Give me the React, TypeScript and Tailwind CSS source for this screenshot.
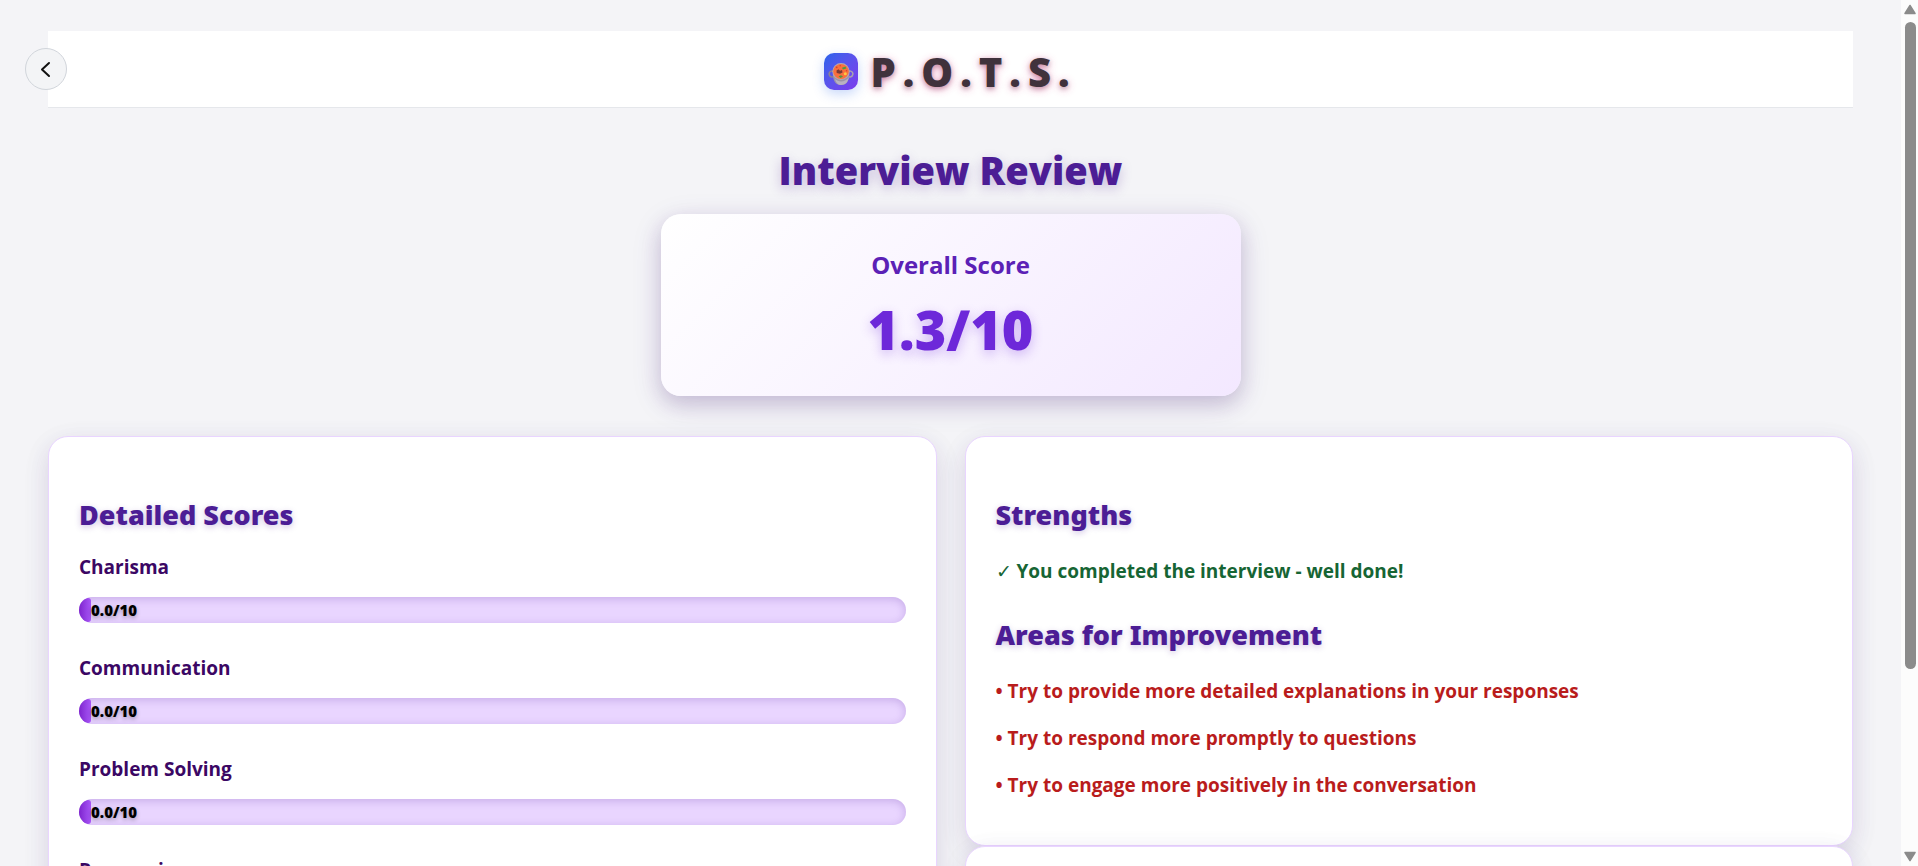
const scores = [
  { label: "Charisma", value: 0 },
  { label: "Communication", value: 0 },
  { label: "Problem Solving", value: 0 },
  { label: "Responsiveness", value: 0 },
];

const strengths = ["You completed the interview - well done!"];

const improvements = [
  "Try to provide more detailed explanations in your responses",
  "Try to respond more promptly to questions",
  "Try to engage more positively in the conversation",
];

const cardClass =
  "rounded-[20px] border border-[#e9d5ff] bg-white px-[30px] shadow-[0_8px_32px_rgba(76,29,149,0.06),0_8px_24px_rgba(60,40,90,0.10)]";
const headingClass =
  "font-['Noto_Sans',sans-serif] text-[27px] leading-9 font-black text-[#4c1d95] [text-shadow:0_2px_6px_rgba(76,29,149,0.25)]";

function PotIcon() {
  return (
    <svg viewBox="0 0 26 24" className="h-6 w-[26px]" aria-hidden="true">
      <ellipse cx="4" cy="12" rx="2.8" ry="3" fill="none" stroke="#8d8592" strokeWidth="1.5" transform="rotate(-15 4 12)" />
      <ellipse cx="22" cy="12" rx="2.8" ry="3" fill="none" stroke="#aaa3ad" strokeWidth="1.5" transform="rotate(15 22 12)" />
      <path d="M4.8 9.5C4.8 17 6 23 13 23s8.400-6 8.400-13.500z" fill="#9c94a5" />
      <path d="M7 17c1.200 4 3 6 6 6 4.500 0 7-3 8-8-3 5-10 6-14 2z" fill="#b9b2c2" />
      <ellipse cx="13" cy="9.500" rx="8.600" ry="8.500" fill="#b5a9b1" />
      <ellipse cx="13" cy="9.500" rx="7.800" ry="7.600" fill="#f9703e" />
      <path d="M8.500 8.500l2-1.300 1.500 1.500 2-.6.500 2.400-2.500 1.300-3.300-.8z" fill="#7b3a35" />
      <path d="M14 5.800l3.500-1.200.8 1.800-3.400 1.200zM10.500 14.200l2.500-.9 2 1.300-2.400 1.300z" fill="#4e9a3f" />
      <circle cx="17.300" cy="11.800" r="1.500" fill="#ffc83d" />
      <circle cx="8.700" cy="5.300" r=".9" fill="#d9412d" />
      <circle cx="12.200" cy="3.800" r=".7" fill="#d9412d" />
      <circle cx="18.600" cy="8.700" r=".7" fill="#d9412d" />
    </svg>
  );
}

function ScoreRow({ label, value }: { label: string; value: number }) {
  return (
    <div>
      <h3 className="text-[19px] leading-7 font-bold text-[#3b0764]">{label}</h3>
      <div
        role="progressbar"
        aria-label={label}
        aria-valuemin={0}
        aria-valuemax={10}
        aria-valuenow={value}
        className="mt-4 flex h-[26px] items-center overflow-hidden rounded-full bg-[#e9d5ff] shadow-[inset_0_2px_8px_rgba(76,29,149,0.22)]"
      >
        <div
          className="h-6 min-w-3 rounded-l-[12px] rounded-r-[4px] bg-linear-to-r from-[#7e22ce] to-[#a855f7]"
          style={{ width: `${value * 10}%` }}
        />
        <span className="text-[15px] leading-6 font-extrabold text-black [text-shadow:0_2px_4px_rgba(0,0,0,0.3)]">
          {value.toFixed(1)}/10
        </span>
      </div>
    </div>
  );
}

function Scrollbar() {
  return (
    <div className="flex w-[17px] shrink-0 flex-col items-center bg-[#fcfcfc] py-1" aria-hidden="true">
      <svg viewBox="0 0 12 11" className="ml-px h-[11px] w-3">
        <path d="M6 1.500L11 9.500H1z" fill="#8b8b8b" stroke="#8b8b8b" strokeWidth="1.500" strokeLinejoin="round" />
      </svg>
      <div className="mt-[7px] ml-px flex w-[11px] flex-1 flex-col">
        <div className="flex-[78] rounded-full bg-[#8b8b8b]" />
        <div className="flex-[22]" />
      </div>
      <svg viewBox="0 0 12 11" className="ml-px h-[11px] w-3">
        <path d="M6 9.500L11 1.500H1z" fill="#8b8b8b" stroke="#8b8b8b" strokeWidth="1.500" strokeLinejoin="round" />
      </svg>
    </div>
  );
}

export default function App() {
  return (
    <div className="flex h-screen overflow-hidden bg-[#f4f4f7] font-['Open_Sans','Noto_Sans',sans-serif]">
      <div className="relative min-w-0 flex-1 overflow-hidden px-12 pt-[31px]">
        <button
          type="button"
          aria-label="Back"
          className="absolute top-12 left-[25px] flex size-[42px] items-center justify-center rounded-full border border-[#d1d5db] bg-[#f3f4f6] text-[#111111]"
        >
          <svg viewBox="0 0 20 20" className="size-5" fill="none" stroke="currentColor" strokeWidth="2" strokeLinecap="round" strokeLinejoin="round" aria-hidden="true">
            <path d="M13 4L6 10.500L13 17" />
          </svg>
        </button>

        <header className="flex items-center justify-center gap-3 border-b border-[#e5e7eb] bg-white pt-[22px] pb-[17px]">
          <div className="flex h-[37px] w-[34px] items-center justify-center rounded-[10px] bg-linear-to-br from-[#2563eb] to-[#7c3aed] pt-1 shadow-[0_4px_12px_rgba(37,99,235,0.25)]">
            <PotIcon />
          </div>
          <span className="text-[40px] leading-[37px] font-extrabold tracking-[7px] text-[#40323c] [text-shadow:0_2px_8px_rgba(219,39,119,0.45),0_2px_4px_rgba(64,50,60,0.3)]">
            P.O.T.S.
          </span>
        </header>

        <main>
          <h1 className="mt-[38px] text-center text-[38px] leading-[48px] font-extrabold text-[#4c1d95] [text-shadow:0_4px_12px_rgba(76,29,149,0.25)]">
            Interview Review
          </h1>

          <section className="mx-auto mt-5 max-w-[580px] rounded-[20px] bg-[linear-gradient(135deg,#ffffff_0%,#f3e8ff_100%)] pt-[35px] pb-[35px] text-center shadow-[0_8px_32px_rgba(76,29,149,0.12),0_8px_20px_rgba(60,30,100,0.18)]">
            <h2 className="text-[24px] leading-8 font-bold text-[#5b21b6]">Overall Score</h2>
            <p className="mt-4 font-['Noto_Sans',sans-serif] text-[54px] leading-[64px] font-black text-[#6d28d9] [text-shadow:0_4px_12px_rgba(109,40,217,0.3)]">
              1.3/10
            </p>
          </section>

          <div className="mt-10 grid grid-cols-2 gap-7">
            <section className={`${cardClass} pt-[60px] pb-12`}>
              <h2 className={headingClass}>Detailed Scores</h2>
              <div className="mt-5 flex flex-col gap-[31px]">
                {scores.map((s) => (
                  <ScoreRow key={s.label} label={s.label} value={s.value} />
                ))}
              </div>
            </section>

            <div>
              <section className={`${cardClass} pt-[60px] pb-[46px]`}>
                <h2 className={headingClass}>Strengths</h2>
                <ul className="mt-6 flex flex-col gap-[19px] text-[19px] leading-7 font-bold text-[#166534]">
                  {strengths.map((s) => (
                    <li key={s}>
                      <span className="font-normal">✓</span> {s}
                    </li>
                  ))}
                </ul>
                <h2 className={`${headingClass} mt-8`}>Areas for Improvement</h2>
                <ul className="mt-6 flex flex-col gap-[19px] text-[19px] leading-7 font-bold text-[#b91c1c]">
                  {improvements.map((s) => (
                    <li key={s}>• {s}</li>
                  ))}
                </ul>
              </section>
              <section className={`${cardClass} h-60`} />
            </div>
          </div>
        </main>
      </div>
      <Scrollbar />
    </div>
  );
}
